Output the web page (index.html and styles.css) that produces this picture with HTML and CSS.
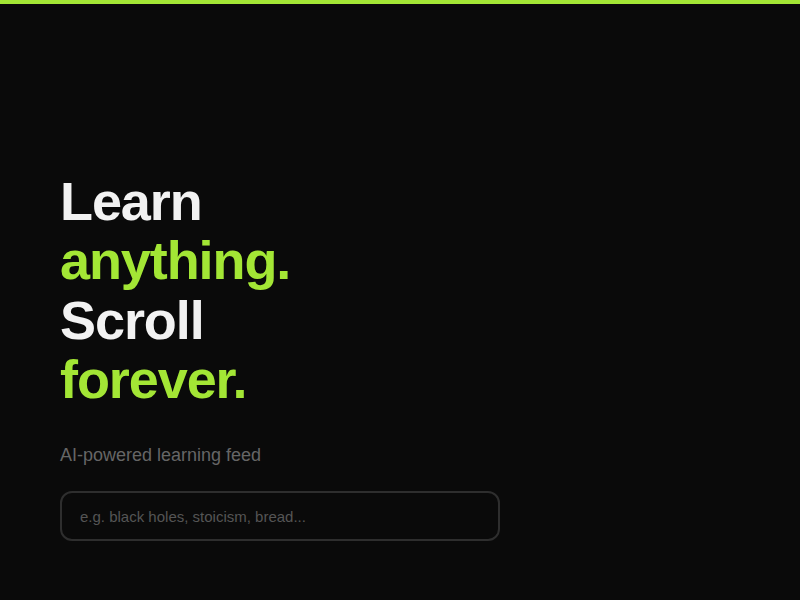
FILE: index.html
```html
<!DOCTYPE html>
<html>
<head>
<meta charset="utf-8">
<link rel="stylesheet" href="styles.css">
</head>
<body>
<div class="topbar"></div>
<main class="hero">
  <h1 class="title">
    <span class="w">Learn</span>
    <span class="g">anything.</span>
    <span class="w">Scroll</span>
    <span class="g">forever.</span>
  </h1>
  <p class="sub">AI-powered learning feed</p>
  <input class="search" type="text" placeholder="e.g. black holes, stoicism, bread...">
</main>
</body>
</html>
```
FILE: styles.css
```css
html, body {
  margin: 0;
  padding: 0;
  background: #0a0a0a;
  height: 100%;
}
body {
  font-family: "Liberation Sans", Arial, sans-serif;
  overflow: hidden;
}
.topbar {
  height: 4px;
  background: #a3e635;
}
.hero {
  padding: 168px 60px 0 60px;
  display: flex;
  flex-direction: column;
  align-items: flex-start;
}
.title {
  margin: 0;
  font-size: 54px;
  line-height: 59.4px;
  font-weight: 700;
  letter-spacing: -0.02em;
  display: flex;
  flex-direction: column;
}
.w { color: #f2f2f2; }
.g { color: #a3e635; }
.sub {
  margin: 33px 0 0 0;
  font-size: 18px;
  line-height: 24px;
  color: #666666;
}
.search {
  margin-top: 24px;
  box-sizing: border-box;
  width: 440px;
  height: 50px;
  border: 2px solid #2e2e2e;
  border-radius: 12px;
  background: #0a0a0a;
  padding: 2px 18px 0 18px;
  font-family: "Liberation Sans", Arial, sans-serif;
  font-size: 15px;
  color: #f2f2f2;
  outline: none;
}
.search::placeholder {
  color: #555555;
}
```
